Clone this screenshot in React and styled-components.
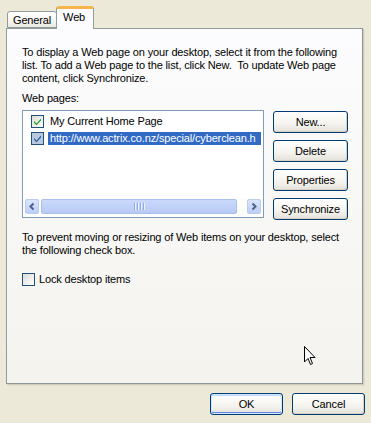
import React from "react";
import styled, { createGlobalStyle } from "styled-components";

const GlobalStyle = createGlobalStyle`
  html, body {
    margin: 0;
    padding: 0;
    background: #ece9d8;
  }
  body {
    font-family: Tahoma, "Liberation Sans", "DejaVu Sans", sans-serif;
    font-size: 11px;
    letter-spacing: -0.15px;
    color: #000;
  }
`;

const Dialog = styled.div`
  width: 371px;
  height: 423px;
  background: #ece9d8;
  display: flex;
  flex-direction: column;
  box-sizing: border-box;
  padding: 6px 8px 0 6px;
`;

const TabStrip = styled.div`
  display: flex;
  align-items: flex-end;
  padding-left: 1px;
  height: 22px;
  position: relative;
  z-index: 1;
`;

const Tab = styled.div`
  box-sizing: border-box;
  height: ${(p) => (p.active ? "23px" : "17px")};
  margin-bottom: ${(p) => (p.active ? "-1px" : "0")};
  padding: ${(p) => (p.active ? "2px 8px 0 6px" : "2px 5px 0 5px")};
  border: 1px solid #919b9c;
  border-bottom: ${(p) => (p.active ? "none" : "1px solid #919b9c")};
  border-top: ${(p) => (p.active ? "3px solid #f7b449" : "1px solid #919b9c")};
  border-radius: 3px 3px 0 0;
  background: ${(p) =>
    p.active ? "#fcfcfe" : "linear-gradient(#ffffff, #f3f3ef 70%, #e8e8e0)"};
  font-size: 11px;
  line-height: 13px;
  margin-right: -1px;
  position: relative;
  z-index: ${(p) => (p.active ? 2 : 1)};
`;

const Panel = styled.div`
  position: relative;
  box-sizing: border-box;
  width: 357px;
  height: 356px;
  border: 1px solid #919b9c;
  border-right-color: #8e9597;
  border-bottom-color: #8e9597;
  box-shadow: 1px 1px 0 #d0cdbe, 2px 2px 0 #e2dfd0;
  background: linear-gradient(#fcfcfe, #f4f3ee);
  padding: 17px 14px 0 15px;
  display: flex;
  flex-direction: column;
`;

const Text = styled.p`
  margin: 0;
  line-height: 13px;
  font-size: 11px;
`;

const Label = styled(Text)`
  margin-top: 7px;
`;

const ListRow = styled.div`
  display: flex;
  gap: 9px;
  margin-top: 5px;
`;

const ListBox = styled.div`
  box-sizing: border-box;
  width: 244px;
  height: 108px;
  border: 1px solid #7f9db9;
  background: #fff;
  display: flex;
  flex-direction: column;
  padding: 4px 2px 2px 8px;
  overflow: hidden;
`;

const Items = styled.div`
  flex: 1;
  display: flex;
  flex-direction: column;
  gap: 4px;
`;

const Item = styled.div`
  display: flex;
  align-items: center;
  gap: 4px;
  height: 13px;
  white-space: nowrap;
`;

const ItemText = styled.span`
  line-height: 13px;
  padding: 0 2px 0 2px;
  flex: ${(p) => (p.selected ? 1 : "none")};
  background: ${(p) => (p.selected ? "#316ac5" : "transparent")};
  color: ${(p) => (p.selected ? "#fff" : "#000")};
  overflow: hidden;
`;

const Check = styled.span`
  box-sizing: border-box;
  width: 13px;
  height: 13px;
  flex: none;
  border: 1px solid #1c5180;
  background: ${(p) =>
    p.dim ? "#b8c8de" : "linear-gradient(135deg, #dcdcd7, #ffffff)"};
  display: flex;
  align-items: center;
  justify-content: center;
`;

const ScrollBar = styled.div`
  display: flex;
  height: 15px;
  margin-left: -6px;
  background: #fdfdf8;
  gap: 2px;
  margin-bottom: 1px;
`;

const ArrowBtn = styled.div`
  box-sizing: border-box;
  width: 14px;
  height: 15px;
  border: 1px solid #bbcbf0;
  border-radius: 2px;
  background: linear-gradient(#dbe6fd, #bccdf8);
  display: flex;
  align-items: center;
  justify-content: center;
`;

const Thumb = styled.div`
  box-sizing: border-box;
  width: 196px;
  height: 15px;
  border: 1px solid #a9bdee;
  border-radius: 2px;
  background: linear-gradient(#cad9fb, #b8cbf6);
  display: flex;
  align-items: center;
  justify-content: center;
  gap: 1px;
`;

const Grip = styled.span`
  width: 1px;
  height: 7px;
  background: #8faae8;
  box-shadow: 1px 0 0 #eef3fe;
  margin-right: 1px;
`;

const Track = styled.div`
  flex: 1;
`;

const ButtonColumn = styled.div`
  display: flex;
  flex-direction: column;
  gap: 7px;
  padding-top: 1px;
`;

const Button = styled.button`
  box-sizing: border-box;
  width: ${(p) => p.w || 75}px;
  height: 22px;
  border: 1px solid #003c74;
  border-radius: 3px;
  background: linear-gradient(#ffffff, #f4f3ee 60%, #e3e1d8);
  box-shadow: ${(p) =>
    p.focused
      ? "inset 0 0 0 1px #cee7ff, inset 0 -1px 0 1px #6982ee, inset 0 1px 0 1px #b8d8fb"
      : "inset -1px -1px 0 #d6d0c5"};
  font-family: Tahoma, "Liberation Sans", "DejaVu Sans", sans-serif;
  font-size: 11px;
  letter-spacing: -0.15px;
  color: #000;
  padding: 0;
  line-height: 13px;
`;

const Paragraph2 = styled(Text)`
  margin-top: 11px;
`;

const LockRow = styled.label`
  display: flex;
  align-items: center;
  gap: 4px;
  margin-top: 16px;
  line-height: 13px;
`;

const LockBox = styled(Check)`
  background: linear-gradient(135deg, #dcdcd7, #ffffff);
`;

const Cursor = styled.svg`
  position: absolute;
  left: 297px;
  top: 317px;
`;

const Footer = styled.div`
  display: flex;
  justify-content: flex-end;
  gap: 9px;
  margin-top: 9px;
  margin-right: -2px;
`;

function Tick({ color = "#21a121" }) {
  return (
    <svg width="9" height="9" viewBox="0 0 9 9">
      <path d="M1 4 L3.5 6.5 L8 1.5 L8 3.5 L3.5 8.3 L1 5.8 Z" fill={color} />
    </svg>
  );
}

function Arrow({ dir }) {
  const d = dir === "left" ? "M5.5 1.5 L2.5 4.5 L5.5 7.5" : "M2.5 1.5 L5.5 4.5 L2.5 7.5";
  return (
    <svg width="8" height="9" viewBox="0 0 8 9">
      <path d={d} fill="none" stroke="#4d6185" strokeWidth="2" />
    </svg>
  );
}

export default function App() {
  return (
    <>
      <GlobalStyle />
      <Dialog>
        <TabStrip>
          <Tab>General</Tab>
          <Tab active>Web</Tab>
        </TabStrip>
        <Panel>
          <Text>
            To display a Web page on your desktop, select it from the following list. To add a
            Web page to the list, click New.&nbsp; To update Web page content, click Synchronize.
          </Text>
          <Label>Web pages:</Label>
          <ListRow>
            <ListBox>
              <Items>
                <Item>
                  <Check>
                    <Tick />
                  </Check>
                  <ItemText>My Current Home Page</ItemText>
                </Item>
                <Item>
                  <Check dim>
                    <Tick color="#2a5f9e" />
                  </Check>
                  <ItemText selected>http://www.actrix.co.nz/special/cyberclean.h</ItemText>
                </Item>
              </Items>
              <ScrollBar>
                <ArrowBtn>
                  <Arrow dir="left" />
                </ArrowBtn>
                <Thumb>
                  <Grip />
                  <Grip />
                  <Grip />
                  <Grip />
                </Thumb>
                <Track />
                <ArrowBtn>
                  <Arrow dir="right" />
                </ArrowBtn>
              </ScrollBar>
            </ListBox>
            <ButtonColumn>
              <Button>New...</Button>
              <Button>Delete</Button>
              <Button>Properties</Button>
              <Button>Synchronize</Button>
            </ButtonColumn>
          </ListRow>
          <Paragraph2>
            To prevent moving or resizing of Web items on your desktop, select the following check
            box.
          </Paragraph2>
          <LockRow>
            <LockBox />
            <span>Lock desktop items</span>
          </LockRow>
          <Cursor width="12" height="20" viewBox="0 0 12 20">
            <path
              d="M0.5 0.5 L0.5 16 L4 12.5 L6.5 18.5 L8.5 17.5 L6 11.5 L11 11.5 Z"
              fill="#fff"
              stroke="#000"
              strokeWidth="1"
              strokeLinejoin="miter"
            />
          </Cursor>
        </Panel>
        <Footer>
          <Button w={73} focused>
            OK
          </Button>
          <Button w={73}>Cancel</Button>
        </Footer>
      </Dialog>
    </>
  );
}
